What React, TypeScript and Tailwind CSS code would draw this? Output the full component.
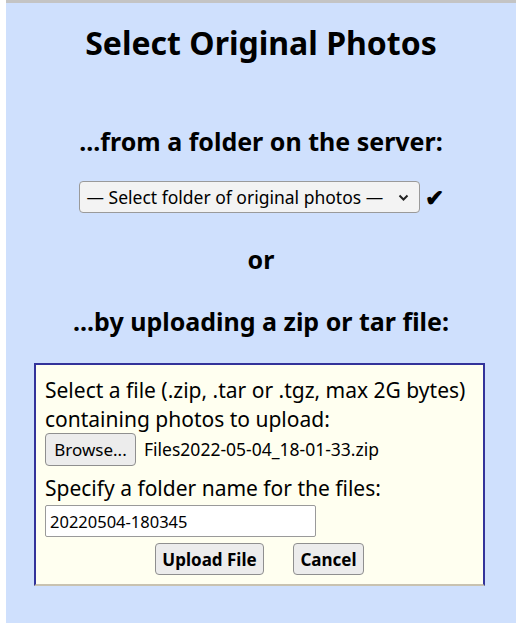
export default function App() {
  return (
    <div className="flex h-[623px] w-full bg-white pl-[6px] font-['Noto_Sans',sans-serif] text-black">
      <div className="flex flex-1 flex-col items-center border-t-[3px] border-[#c4c4c4] bg-[#cfe0fd]">
        <h1 className="mt-[18px] text-[32px] font-bold leading-[44px]">Select Original Photos</h1>

        <h2 className="mt-[59px] text-[25px] font-bold leading-[34px]">...from a folder on the server:</h2>

        <div className="mt-[23px] flex items-center gap-[5px]">
          <div className="flex h-[32px] w-[341px] items-center justify-between rounded-[4px] border border-[#9a9a9a] bg-[#f3f3f3] pl-[7px] pr-[10px] text-[17.5px]">
            <span>— Select folder of original photos —</span>
            <svg width="11" height="8" viewBox="0 0 11 8" className="mt-[1px]">
              <path d="M1.5 1.5 L5.5 5.5 L9.5 1.5" fill="none" stroke="#222" strokeWidth="2" />
            </svg>
          </div>
          <span className="text-[23px] font-bold leading-none">✔</span>
        </div>

        <div className="mt-[29px] text-[25px] font-bold leading-[34px]">or</div>

        <h2 className="mt-[28px] text-[25px] font-bold leading-[34px]">...by uploading a zip or tar file:</h2>

        <form className="ml-[28px] mt-[25px] flex w-[451px] flex-col self-start border-2 border-x-[#33339a] border-t-[#33339a] border-b-[#c8c2b0] bg-[#fffff0] px-[9px] pb-[9px] pt-[11px] text-[21px] leading-[29px]">
          <p>Select a file (.zip, .tar or .tgz, max 2G bytes)</p>
          <p>containing photos to upload:</p>
          <div className="mt-[-1px] flex items-center gap-[8px]">
            <button type="button" className="h-[33px] w-[91px] rounded-[4px] border border-[#8f8f8f] bg-[#ececec] text-[17px]">
              Browse...
            </button>
            <span className="text-[17.5px]">Files2022-05-04_18-01-33.zip</span>
          </div>
          <p className="mt-[8px]">Specify a folder name for the files:</p>
          <input
            defaultValue="20220504-180345"
            className="mt-[2px] h-[32px] w-[271px] rounded-[2px] border border-[#9a9a9a] bg-white px-[4px] text-[16.5px] outline-none"
          />
          <div className="mt-[6px] flex justify-center gap-[29px]">
            <button type="button" className="h-[32px] w-[109px] rounded-[4px] border border-[#8f8f8f] bg-[#ececec] text-[17px] font-bold">
              Upload File
            </button>
            <button type="button" className="h-[32px] w-[71px] rounded-[4px] border border-[#8f8f8f] bg-[#ececec] text-[17px] font-bold">
              Cancel
            </button>
          </div>
        </form>
      </div>
    </div>
  );
}
